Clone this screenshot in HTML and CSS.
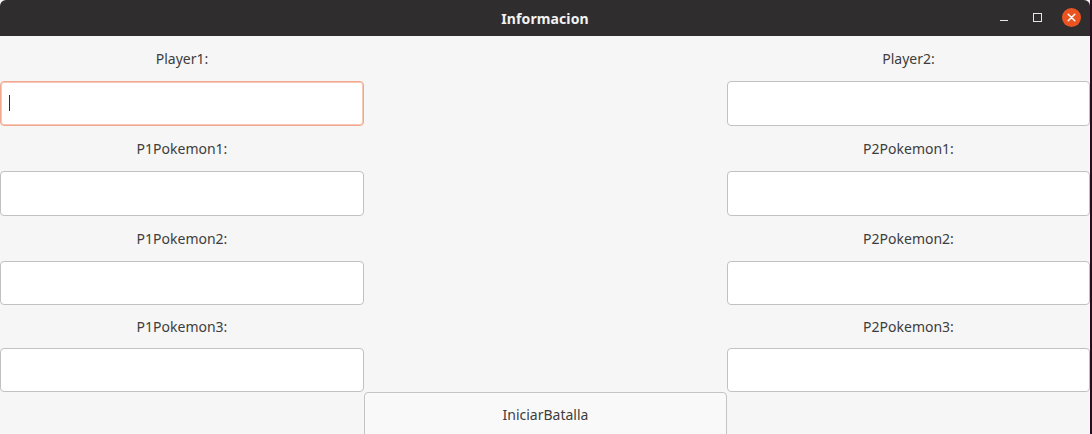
FILE: index.html
```html
<!DOCTYPE html>
<html lang="es">
<head>
<meta charset="utf-8">
<title>Informacion</title>
<link rel="stylesheet" href="styles.css">
</head>
<body>
<div class="window">
  <header class="titlebar">
    <span class="title">Informacion</span>
    <div class="controls">
      <span class="ctl ctl-min"><svg width="8" height="8" viewBox="0 0 8 8"><rect x="0" y="6" width="8" height="1" fill="#e6e6e6"/></svg></span>
      <span class="ctl ctl-max"><svg width="9" height="9" viewBox="0 0 9 9"><rect x="0.5" y="0.5" width="8" height="8" fill="none" stroke="#e6e6e6" stroke-width="1"/></svg></span>
      <span class="ctl ctl-close"><svg width="19" height="19" viewBox="0 0 19 19"><circle cx="9.5" cy="9.5" r="9.5" fill="#e95420"/><path d="M6.2 6.2 L12.8 12.8 M12.8 6.2 L6.2 12.8" stroke="#ffffff" stroke-width="1.5" stroke-linecap="round"/></svg></span>
    </div>
  </header>
  <main class="form">
    <label class="lbl c1 r1">Player1:</label>
    <label class="lbl c3 r1">Player2:</label>
    <div class="entry focused c1 r2"><span class="caret"></span></div>
    <div class="entry c3 r2"></div>

    <label class="lbl c1 r3">P1Pokemon1:</label>
    <label class="lbl c3 r3">P2Pokemon1:</label>
    <div class="entry c1 r4"></div>
    <div class="entry c3 r4"></div>

    <label class="lbl c1 r5">P1Pokemon2:</label>
    <label class="lbl c3 r5">P2Pokemon2:</label>
    <div class="entry c1 r6"></div>
    <div class="entry c3 r6"></div>

    <label class="lbl c1 r7">P1Pokemon3:</label>
    <label class="lbl c3 r7">P2Pokemon3:</label>
    <div class="entry c1 r8"></div>
    <div class="entry c3 r8"></div>

    <button class="btn c2 r9">IniciarBatalla</button>
  </main>
</div>
<div class="desktop-edge"></div>
</body>
</html>
```
FILE: styles.css
```css
html, body {
  margin: 0;
  padding: 0;
  height: 434px;
  overflow: hidden;
}
body {
  display: flex;
  background: #2a0b20;
  font-family: "Noto Sans", "Open Sans", sans-serif;
}
.window {
  width: 1090px;
  height: 434px;
  display: flex;
  flex-direction: column;
  background: #f6f6f6;
}
.desktop-edge {
  flex: 1;
  background: #2a0b20;
}
.titlebar {
  height: 36px;
  flex: none;
  background: #2f2d2e;
  border-radius: 6px 6px 0 0;
  display: flex;
  align-items: center;
  justify-content: center;
  position: relative;
}
.title {
  color: #f2f2f2;
  font-weight: bold;
  font-size: 14px;
  letter-spacing: 0.1px;
}
.controls {
  position: absolute;
  right: 9px;
  top: 8px;
  display: flex;
  align-items: center;
}
.ctl {
  display: flex;
}
.ctl-min { margin-right: 25px; margin-top: 0; }
.ctl-max { margin-right: 20px; margin-top: -1px; }
.ctl-close { margin-top: 0; }

.form {
  display: grid;
  grid-template-columns: 364px 363px 363px;
  grid-template-rows: 45px 45px 45px 45px 45px 44px 43px 44px 44px;
  align-content: start;
  overflow: hidden;
  flex: 1;
}
.c1 { grid-column: 1; }
.c2 { grid-column: 2; }
.c3 { grid-column: 3; }
.r1 { grid-row: 1; }
.r2 { grid-row: 2; }
.r3 { grid-row: 3; }
.r4 { grid-row: 4; }
.r5 { grid-row: 5; }
.r6 { grid-row: 6; }
.r7 { grid-row: 7; }
.r8 { grid-row: 8; }
.r9 { grid-row: 9; }

.lbl {
  display: flex;
  align-items: center;
  justify-content: center;
  color: #3d3d3d;
  font-size: 14px;
}
.entry {
  box-sizing: border-box;
  background: #ffffff;
  border: 1px solid #c3c1bf;
  border-radius: 4px;
  position: relative;
}
.entry.focused {
  border-color: #f2a88e;
  box-shadow: inset 0 0 0 1px #f7c6b4;
}
.caret {
  position: absolute;
  left: 8px;
  top: 13px;
  width: 1px;
  height: 16px;
  background: #2e2e2e;
}
.btn {
  height: 46px;
  box-sizing: border-box;
  background: #f9f9f9;
  border: 1px solid #c6c4c2;
  border-radius: 4px;
  font-family: inherit;
  font-size: 14px;
  color: #3d3d3d;
  padding: 0 0 2px 0;
  display: flex;
  align-items: center;
  justify-content: center;
}
```
